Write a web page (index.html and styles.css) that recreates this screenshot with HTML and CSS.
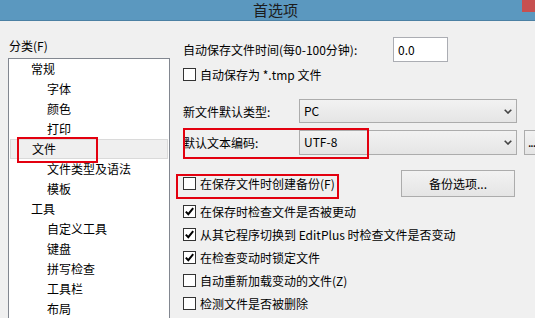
FILE: index.html
```html
<!DOCTYPE html>
<html>
<head>
    <title>首选项</title>
    <link rel="stylesheet" href="styles.css">
</head>
<body>

<div class="titlebar">
    <span class="title">首选项</span>
    <span class="closeBtn"></span>
</div>

<div class="main">
    <div class="leftCol">
        <div class="catLabel">分类(F)</div>
        <ul class="tree">
            <li class="lvl1">常规</li>
            <li class="lvl2">字体</li>
            <li class="lvl2">颜色</li>
            <li class="lvl2">打印</li>
            <li class="lvl1 selected">文件<span class="mark markFile"></span></li>
            <li class="lvl2">文件类型及语法</li>
            <li class="lvl2">模板</li>
            <li class="lvl1">工具</li>
            <li class="lvl2">自定义工具</li>
            <li class="lvl2">键盘</li>
            <li class="lvl2">拼写检查</li>
            <li class="lvl2">工具栏</li>
            <li class="lvl2">布局</li>
        </ul>
    </div>

    <div class="rightCol">
        <div class="row rowSave">
            <span class="saveLabel">自动保存文件时间(每0-100分钟):</span>
            <span class="textBox">0.0</span>
        </div>

        <div class="row rowTmp">
            <span class="check"></span>
            <span>自动保存为 *.tmp 文件</span>
        </div>

        <div class="row rowType">
            <span class="fieldLabel">新文件默认类型:</span>
            <span class="combo">PC
                <svg class="arrow" width="8" height="5" viewBox="0 0 8 5"><path d="M0.7 0.7 L4 4 L7.3 0.7" fill="none" stroke="#444" stroke-width="1.6"/></svg>
            </span>
        </div>

        <div class="row rowEnc">
            <span class="fieldLabel">默认文本编码:</span>
            <span class="combo">UTF-8
                <svg class="arrow" width="8" height="5" viewBox="0 0 8 5"><path d="M0.7 0.7 L4 4 L7.3 0.7" fill="none" stroke="#444" stroke-width="1.6"/></svg>
            </span>
            <span class="moreBtn">...</span>
            <span class="mark markEnc"></span>
        </div>

        <div class="row rowBackup">
            <span class="check"></span>
            <span>在保存文件时创建备份(F)</span>
            <span class="button">备份选项...</span>
            <span class="mark markBackup"></span>
        </div>

        <div class="checkList">
            <div class="row checkRow">
                <span class="check"><svg width="11" height="11" viewBox="0 0 11 11"><path d="M1.8 5.6 L4.3 8.2 L9.2 2.2" fill="none" stroke="#000" stroke-width="2"/></svg></span>
                <span>在保存时检查文件是否被更动</span>
            </div>
            <div class="row checkRow">
                <span class="check"><svg width="11" height="11" viewBox="0 0 11 11"><path d="M1.8 5.6 L4.3 8.2 L9.2 2.2" fill="none" stroke="#000" stroke-width="2"/></svg></span>
                <span>从其它程序切换到 EditPlus 时检查文件是否变动</span>
            </div>
            <div class="row checkRow">
                <span class="check"><svg width="11" height="11" viewBox="0 0 11 11"><path d="M1.8 5.6 L4.3 8.2 L9.2 2.2" fill="none" stroke="#000" stroke-width="2"/></svg></span>
                <span>在检查变动时锁定文件</span>
            </div>
            <div class="row checkRow">
                <span class="check"></span>
                <span>自动重新加载变动的文件(Z)</span>
            </div>
            <div class="row checkRow">
                <span class="check"></span>
                <span>检测文件是否被删除</span>
            </div>
        </div>
    </div>
</div>

</body>
</html>
```

FILE: styles.css
```css
body{
    margin: 0;
    width: 535px;
    height: 318px;
    overflow: hidden;
    background: #f0f0f0;
    font-family: "Noto Sans CJK SC", "Microsoft YaHei", sans-serif;
    font-size: 12px;
    color: #000;
}

/* window title */
.titlebar{
    position: relative;
    height: 20px;
    background: #5b98bf;
    border-bottom: 1px solid #4b80a3;
}
.title{
    display: block;
    padding-left: 253px;
    font-size: 15px;
    line-height: 20px;
    color: #1c1c1c;
}
.closeBtn{
    position: absolute;
    right: 0;
    top: 0;
    width: 13px;
    height: 12px;
    background: #c75050;
}

.main{
    display: flex;
    padding-left: 8px;
}

/* category tree */
.leftCol{
    width: 162px;
    flex: none;
}
.catLabel{
    margin: 17px 0 4px 1px;
    line-height: 16px;
}
.tree{
    list-style: none;
    margin: 0;
    padding: 0;
    height: 260px;
    overflow: hidden;
    background: #fff;
    border: 1px solid #828790;
    border-bottom: none;
}
.tree li{
    position: relative;
    height: 20px;
    line-height: 20px;
}
.lvl1{ padding-left: 22px; }
.lvl2{ padding-left: 38px; }
.tree li.selected{
    margin: 0 1px;
    padding-left: 21px;
    height: 18px;
    line-height: 18px;
    background: #efefef;
    border: 1px solid #dadada;
}

/* red annotation boxes */
.mark{
    position: absolute;
    border: 2px solid #e3000f;
}
.markFile{
    left: 6px;
    top: -3px;
    width: 77px;
    height: 22px;
}
.markEnc{
    left: 0;
    top: -2px;
    width: 182px;
    height: 27px;
}
.markBackup{
    left: -7px;
    top: 4px;
    width: 159px;
    height: 21px;
}

/* options */
.rightCol{
    flex: 1;
    min-width: 0;
    padding-left: 13px;
}
.row{
    position: relative;
    display: flex;
    align-items: center;
    white-space: nowrap;
}
.rowSave{
    margin-top: 16px;
    height: 25px;
}
.saveLabel{
    width: 210px;
}
.textBox{
    box-sizing: border-box;
    width: 55px;
    height: 25px;
    padding: 0 4px;
    line-height: 23px;
    background: #fff;
    border: 1px solid #abadb3;
}
.rowTmp{
    height: 25px;
}
.rowType{
    margin-top: 12px;
    height: 24px;
}
.rowEnc{
    margin-top: 7px;
    height: 25px;
}
.fieldLabel{
    width: 116px;
}
.combo{
    position: relative;
    box-sizing: border-box;
    width: 218px;
    height: 100%;
    padding-left: 4px;
    line-height: 22px;
    background: linear-gradient(#f2f2f2, #e5e5e5);
    border: 1px solid #acacac;
}
.arrow{
    position: absolute;
    right: 4px;
    top: 9px;
}
.moreBtn{
    box-sizing: border-box;
    margin-left: 7px;
    width: 11px;
    height: 25px;
    padding-left: 3px;
    line-height: 22px;
    letter-spacing: -1px;
    background: linear-gradient(#f2f2f2, #e5e5e5);
    border: 1px solid #acacac;
    border-right: none;
    flex: none;
}

.check{
    box-sizing: border-box;
    display: flex;
    align-items: center;
    justify-content: center;
    width: 13px;
    height: 13px;
    margin-right: 4px;
    background: #fff;
    border: 1px solid #333;
    flex: none;
}

.rowBackup{
    margin-top: 15px;
    height: 27px;
}
.button{
    box-sizing: border-box;
    margin-left: auto;
    margin-right: 20px;
    width: 114px;
    height: 27px;
    line-height: 25px;
    text-align: center;
    background: linear-gradient(#f2f2f2, #e5e5e5);
    border: 1px solid #acacac;
}

.checkList{
    margin-top: 3px;
}
.checkRow{
    height: 23px;
}
```
